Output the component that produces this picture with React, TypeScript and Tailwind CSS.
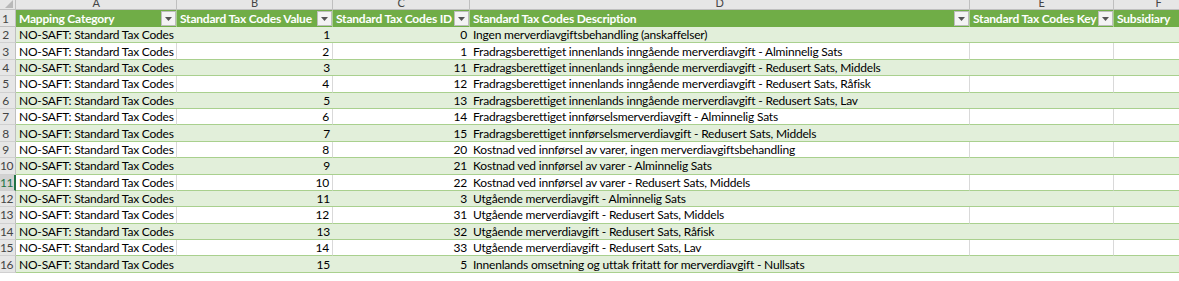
import React from 'react';

const cols = [
  { key: 'A', width: 161, title: 'Mapping Category' },
  { key: 'B', width: 156, title: 'Standard Tax Codes Value' },
  { key: 'C', width: 137, title: 'Standard Tax Codes ID' },
  { key: 'D', width: 500, title: 'Standard Tax Codes Description' },
  { key: 'E', width: 144, title: 'Standard Tax Codes Key' },
  { key: 'F', width: 90, title: 'Subsidiary' },
];

const rows: [number, number, string][] = [
  [1, 0, 'Ingen merverdiavgiftsbehandling (anskaffelser)'],
  [2, 1, 'Fradragsberettiget innenlands inngående merverdiavgift - Alminnelig Sats'],
  [3, 11, 'Fradragsberettiget innenlands inngående merverdiavgift - Redusert Sats, Middels'],
  [4, 12, 'Fradragsberettiget innenlands inngående merverdiavgift - Redusert Sats, Råfisk'],
  [5, 13, 'Fradragsberettiget innenlands inngående merverdiavgift - Redusert Sats, Lav'],
  [6, 14, 'Fradragsberettiget innførselsmerverdiavgift - Alminnelig Sats'],
  [7, 15, 'Fradragsberettiget innførselsmerverdiavgift - Redusert Sats, Middels'],
  [8, 20, 'Kostnad ved innførsel av varer, ingen merverdiavgiftsbehandling'],
  [9, 21, 'Kostnad ved innførsel av varer - Alminnelig Sats'],
  [10, 22, 'Kostnad ved innførsel av varer - Redusert Sats, Middels'],
  [11, 3, 'Utgående merverdiavgift - Alminnelig Sats'],
  [12, 31, 'Utgående merverdiavgift - Redusert Sats, Middels'],
  [13, 32, 'Utgående merverdiavgift - Redusert Sats, Råfisk'],
  [14, 33, 'Utgående merverdiavgift - Redusert Sats, Lav'],
  [15, 5, 'Innenlands omsetning og uttak fritatt for merverdiavgift - Nullsats'],
];

const FilterButton = () => (
  <div className="absolute right-0 top-[1px] w-[15px] h-[15px] bg-[#f3f3f3] border border-[#bdbdbd] flex items-center justify-center">
    <svg width="7" height="4" viewBox="0 0 7 4">
      <path d="M0 0 L7 0 L3.5 4 Z" fill="#555" />
    </svg>
  </div>
);

const App: React.FC = () => {
  return (
    <div className="w-[1179px] h-[281px] overflow-hidden bg-white font-['Lato',sans-serif] text-[12px] tracking-[-0.2px] text-black select-none">
      {/* Column letters */}
      <div className="flex h-[10px] bg-[#e6e6e6] border-b border-[#bfbfbf] overflow-hidden">
        <div className="w-[16px] shrink-0 relative border-r border-[#bfbfbf]">
          <svg className="absolute right-[2px] bottom-[1px]" width="8" height="8" viewBox="0 0 8 8">
            <path d="M8 0 L8 8 L0 8 Z" fill="#b8b8b8" />
          </svg>
        </div>
        {cols.map(c => (
          <div
            key={c.key}
            style={{ width: c.width }}
            className="shrink-0 flex items-end justify-center border-r border-[#bfbfbf] text-[#444] text-[11px] leading-none pb-[1px]"
          >
            {c.key}
          </div>
        ))}
      </div>

      {/* Header row */}
      <div className="flex h-[17px]">
        <div className="w-[16px] shrink-0 bg-[#e6e6e6] border-r border-b border-[#bfbfbf] text-[#444] flex items-center pt-[1px]">
          <span className="w-[11px] text-center leading-none">1</span>
        </div>
        {cols.map(c => (
          <div
            key={c.key}
            style={{ width: c.width }}
            className="shrink-0 relative bg-[#70ad47] border-r border-[#a9d08e] overflow-hidden"
          >
            <div className="pl-[3px] pr-[16px] pt-[1px] h-full flex items-center whitespace-nowrap font-bold text-white leading-none overflow-hidden">
              {c.title}
            </div>
            <FilterButton />
          </div>
        ))}
      </div>

      {/* Data rows */}
      {rows.map(([value, id, desc], i) => {
        const band = i % 2 === 0;
        const rowNum = i + 2;
        const active = rowNum === 11;
        const cellBase = band
          ? 'bg-[#e2efda] border-b border-[#a9d08e]'
          : 'bg-white border-b border-[#a9d08e] border-r border-r-[#d9d9d9]';
        return (
          <div key={rowNum} className="flex h-[16.4px]">
            <div
              className={`w-[16px] shrink-0 border-b border-[#d0d0d0] flex items-center pt-[1px] ${
                active ? 'bg-[#d2d2d2] border-r-2 border-r-[#217346] text-[#217346]' : 'bg-[#e6e6e6] border-r border-r-[#bfbfbf] text-[#444]'
              }`}
            >
              <span className="w-[11px] text-center leading-none tracking-[-0.5px]">{rowNum}</span>
            </div>
            <div style={{ width: cols[0].width }} className={`shrink-0 flex items-center pl-[3px] pt-[1px] whitespace-nowrap leading-none ${cellBase}`}>
              NO-SAFT: Standard Tax Codes
            </div>
            <div style={{ width: cols[1].width }} className={`shrink-0 flex items-center justify-end pr-[3px] pt-[1px] leading-none ${cellBase}`}>
              {value}
            </div>
            <div style={{ width: cols[2].width }} className={`shrink-0 flex items-center justify-end pr-[3px] pt-[1px] leading-none ${band ? 'bg-[#e2efda] border-b border-[#a9d08e]' : 'bg-white border-b border-[#a9d08e]'}`}>
              {id}
            </div>
            <div style={{ width: cols[3].width }} className={`shrink-0 flex items-center pl-[3px] pt-[1px] whitespace-nowrap leading-none ${cellBase}`}>
              {desc}
            </div>
            <div style={{ width: cols[4].width }} className={`shrink-0 ${cellBase}`} />
            <div style={{ width: cols[5].width }} className={`shrink-0 ${cellBase}`} />
          </div>
        );
      })}
    </div>
  );
};

export default App;
